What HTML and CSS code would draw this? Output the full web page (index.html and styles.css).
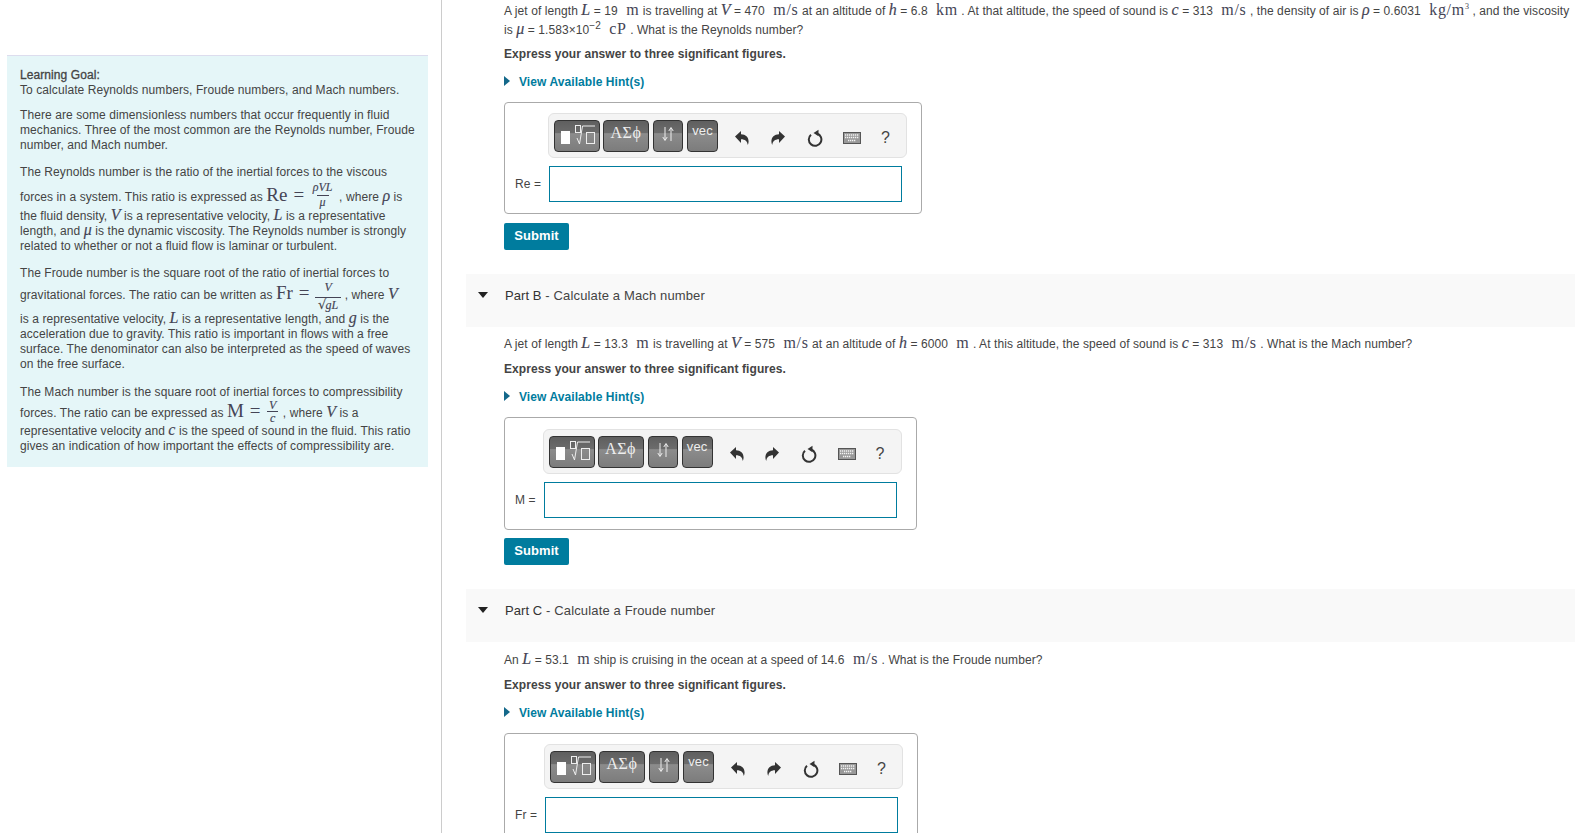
FILE: index.html
```html
<html>

<head>
	<title>Fluid numbers</title>
	<meta charset="UTF-8">
	<link rel="stylesheet" href="styles.css">
</head>

<body>
	<svg class="defs" width="0" height="0">
		<symbol id="undo" viewBox="0 0 16 16">
			<path d="M1 6.500 7 1v3.200c4.600 0 7.600 3 7.600 7.300 0 1.300-.3 2.500-.8 3.500-.5-3.600-2.600-5.700-6.800-5.700V13z" />
		</symbol>
		<symbol id="redo" viewBox="0 0 16 16">
			<path d="M15 6.500 9 1v3.200c-4.600 0-7.600 3-7.600 7.300 0 1.300.3 2.500.8 3.500.5-3.600 2.600-5.700 6.800-5.700V13z" />
		</symbol>
		<symbol id="reset" viewBox="0 0 18 18">
			<path d="M5 5.700A6.300 6.300 0 1 0 11 4.500" fill="none" stroke="#333" stroke-width="2" />
			<path d="M12.500 0.800v6.500L7.500 4z" />
		</symbol>
		<symbol id="keys" viewBox="0 0 18 12">
			<rect x="0.500" y="0.500" width="17" height="11" fill="#999" stroke="#555" />
			<path d="M2 3h14M2 5.500h14M5 8.500h8" stroke="#f4f4f4" stroke-width="1.300" stroke-dasharray="1.300 .7" />
		</symbol>
		<symbol id="templ" viewBox="0 0 44 30">
			<rect x="6" y="10" width="9" height="13" fill="#fff" />
			<rect x="20.500" y="4.500" width="5" height="7" fill="none" stroke="#eee" />
			<path d="M22 17l2.500 6 3-18H40" fill="none" stroke="#eee" />
			<rect x="31.500" y="11.500" width="8" height="11" fill="none" stroke="#eee" />
		</symbol>
		<symbol id="arrows" viewBox="0 0 12 16">
			<path d="M3 1v13M.8 11 3 14.500 5.200 11M9 15V2M6.800 5 9 1.500 11.200 5" fill="none" stroke="#eee" />
		</symbol>
	</svg>

	<div class="layout">
		<div class="left">
			<div class="goal">
				<p class="goal-first"><b class="goal-head">Learning Goal:</b><br>To calculate Reynolds numbers, Froude numbers, and Mach numbers.</p>
				<p>There are some dimensionless numbers that occur frequently in fluid mechanics. Three of the most common are
					the Reynolds number, Froude number, and Mach number.</p>
				<p>The Reynolds number is the ratio of the inertial forces to the viscous<br>
					forces in a system. This ratio is expressed as <span class="big">Re =</span>
					<span class="frac frac-re"><span class="num mi">ρVL</span><span class="den mi">μ</span></span> , where <span class="mi">ρ</span> is<br>
					the fluid density, <span class="mi">V</span> is a representative velocity, <span class="mi">L</span> is a representative<br>
					length, and <span class="mi">μ</span> is the dynamic viscosity. The Reynolds number is strongly<br>
					related to whether or not a fluid flow is laminar or turbulent.</p>
				<p class="froude">The Froude number is the square root of the ratio of inertial forces to<br>
					gravitational forces. The ratio can be written as <span class="big">Fr =</span>
					<span class="frac frac-fr"><span class="num mi">V</span><span class="den mi"><span class="root">√</span><span class="radicand">gL</span></span></span> , where <span class="mi">V</span><br>
					is a representative velocity, <span class="mi">L</span> is a representative length, and <span class="mi">g</span> is the<br>
					acceleration due to gravity. This ratio is important in flows with a free<br>
					surface. The denominator can also be interpreted as the speed of waves<br>
					on the free surface.</p>
				<p>The Mach number is the square root of inertial forces to compressibility<br>
					forces. The ratio can be expressed as <span class="big">M =</span>
					<span class="frac frac-m"><span class="num mi">V</span><span class="den mi">c</span></span> , where <span class="mi">V</span> is a<br>
					representative velocity and <span class="mi">c</span> is the speed of sound in the fluid. This ratio<br>
					gives an indication of how important the effects of compressibility are.</p>
			</div>
		</div>

		<div class="right">
			<div class="part part-a">
				<p class="question">A jet of length <span class="mi">L</span> = 19 <span class="unit">m</span> is travelling at <span class="mi">V</span> = 470 <span class="unit">m/s</span> at an altitude of <span class="mi">h</span> = 6.8 <span class="unit">km</span> . At that altitude, the speed of sound is <span class="mi">c</span> = 313 <span class="unit">m/s</span> , the density of air is <span class="mi">ρ</span> = 0.6031 <span class="unit">kg/m<sup>3</sup></span> , and the viscosity<br>
					is <span class="mi">μ</span> = 1.583×10<sup class="exp">−2</sup> <span class="unit">cP</span> . What is the Reynolds number?</p>
				<p class="express">Express your answer to three significant figures.</p>
				<p class="hint"><span class="tri"></span>View Available Hint(s)</p>
				<div class="answer">
					<div></div>
					<div class="toolbar">
						<span class="btn btn-templ"><svg width="44" height="30"><use href="#templ" /></svg></span>
						<span class="btn btn-greek">ΑΣϕ</span>
						<span class="btn btn-arrows"><svg width="12" height="16"><use href="#arrows" /></svg></span>
						<span class="btn btn-vec">vec</span>
						<span class="tools">
							<svg width="16" height="16"><use href="#undo" /></svg>
							<svg width="16" height="16"><use href="#redo" /></svg>
							<svg width="18" height="18"><use href="#reset" /></svg>
							<svg width="18" height="12"><use href="#keys" /></svg>
							<span class="help">?</span>
						</span>
					</div>
					<label>Re =</label>
					<div class="field"></div>
				</div>
				<span class="submit">Submit</span>
			</div>

			<div class="part-head"><span class="down"></span><span><b class="part-name">Part B</b> - Calculate a Mach number</span></div>
			<div class="part part-b">
				<p class="question">A jet of length <span class="mi">L</span> = 13.3 <span class="unit">m</span> is travelling at <span class="mi">V</span> = 575 <span class="unit">m/s</span> at an altitude of <span class="mi">h</span> = 6000 <span class="unit">m</span> . At this altitude, the speed of sound is <span class="mi">c</span> = 313 <span class="unit">m/s</span> . What is the Mach number?</p>
				<p class="express">Express your answer to three significant figures.</p>
				<p class="hint"><span class="tri"></span>View Available Hint(s)</p>
				<div class="answer">
					<div></div>
					<div class="toolbar">
						<span class="btn btn-templ"><svg width="44" height="30"><use href="#templ" /></svg></span>
						<span class="btn btn-greek">ΑΣϕ</span>
						<span class="btn btn-arrows"><svg width="12" height="16"><use href="#arrows" /></svg></span>
						<span class="btn btn-vec">vec</span>
						<span class="tools">
							<svg width="16" height="16"><use href="#undo" /></svg>
							<svg width="16" height="16"><use href="#redo" /></svg>
							<svg width="18" height="18"><use href="#reset" /></svg>
							<svg width="18" height="12"><use href="#keys" /></svg>
							<span class="help">?</span>
						</span>
					</div>
					<label>M =</label>
					<div class="field"></div>
				</div>
				<span class="submit">Submit</span>
			</div>

			<div class="part-head"><span class="down"></span><span><b class="part-name">Part C</b> - Calculate a Froude number</span></div>
			<div class="part">
				<p class="question">An <span class="mi">L</span> = 53.1 <span class="unit">m</span> ship is cruising in the ocean at a speed of 14.6 <span class="unit">m/s</span> . What is the Froude number?</p>
				<p class="express">Express your answer to three significant figures.</p>
				<p class="hint"><span class="tri"></span>View Available Hint(s)</p>
				<div class="answer">
					<div></div>
					<div class="toolbar">
						<span class="btn btn-templ"><svg width="44" height="30"><use href="#templ" /></svg></span>
						<span class="btn btn-greek">ΑΣϕ</span>
						<span class="btn btn-arrows"><svg width="12" height="16"><use href="#arrows" /></svg></span>
						<span class="btn btn-vec">vec</span>
						<span class="tools">
							<svg width="16" height="16"><use href="#undo" /></svg>
							<svg width="16" height="16"><use href="#redo" /></svg>
							<svg width="18" height="18"><use href="#reset" /></svg>
							<svg width="18" height="12"><use href="#keys" /></svg>
							<span class="help">?</span>
						</span>
					</div>
					<label>Fr =</label>
					<div class="field"></div>
				</div>
			</div>
		</div>
	</div>
</body>

</html>
```

FILE: styles.css
```css
html,
body {
	margin: 0;
	height: 833px;
	overflow: hidden;
	background: #fff;
}

body,
* {
	font-family: "Liberation Sans", Arial, sans-serif;
	font-size: 12px;
	letter-spacing: 0.08px;
	color: #444;
}

.defs {
	display: block;
	height: 0;
}

.layout {
	display: flex;
	height: 833px;
	overflow: hidden;
}

.left {
	width: 442px;
	flex: none;
	padding: 55px 0 0 7px;
	box-sizing: border-box;
	border-right: 1px solid #ccc;
}

.goal {
	width: 421px;
	box-sizing: border-box;
	padding: 12px 8px 13px 13px;
	background: #e5f6f8;
	border-top: 1px solid #dde;
	line-height: 15px;
}

.goal p {
	margin: 0 0 12px 0;
}

.goal .goal-first {
	margin-bottom: 10px;
}

.goal .froude {
	margin-bottom: 13px;
}

.goal p:last-child {
	margin: 0;
}

.goal-head {
	font-weight: normal;
	-webkit-text-stroke: 0.3px #444;
}

.mi {
	font-family: "Liberation Serif", serif;
	font-style: italic;
	font-size: 16px;
	line-height: 0;
	-webkit-text-stroke: 0.15px #445;
	color: #445;
}

.unit,
.unit sup {
	font-family: "Liberation Serif", serif;
	color: #445;
}

.unit {
	font-size: 16px;
	letter-spacing: 0.7px;
	line-height: 0;
	margin: 0 0 0 5px;
}

.unit sup {
	font-size: 8px;
	line-height: 0;
}

.exp {
	font-size: 10px;
	line-height: 0;
}

.big {
	font-family: "Liberation Serif", serif;
	font-size: 19px;
	word-spacing: 1px;
	line-height: 0;
	color: #445;
}

.frac {
	display: inline-flex;
	flex-direction: column;
	align-items: center;
	margin: 0 0 0 2px;
}

.frac .mi {
	display: block;
	font-size: 12px;
	text-align: center;
	padding: 0 3px;
}

.frac .den {
	border-top: 1px solid #445;
}

.frac-re {
	vertical-align: 10px;
}

.frac-re .num {
	line-height: 14px;
	padding-bottom: 1px;
}

.frac-re .den {
	line-height: 13px;
}

.frac-fr {
	vertical-align: 8px;
}

.frac-fr .num {
	line-height: 12px;
	padding-bottom: 4px;
}

.frac-fr .den {
	line-height: 14px;
}

.frac-m {
	vertical-align: 8px;
}

.frac-m .num {
	line-height: 11px;
}

.frac-m .den {
	line-height: 12px;
}

.root {
	font-size: 13px;
	font-style: normal;
	line-height: 0;
	font-family: "DejaVu Sans", sans-serif;
}

.radicand {
	font-family: "Liberation Serif", serif;
	font-size: 12px;
	color: #445;
	border-top: 1px solid #445;
	margin-left: -1px;
}

.right {
	flex: 1;
	min-width: 0;
	padding: 0 0 0 23px;
}

.question {
	margin: 0 0 0 39px;
	line-height: 19px;
	white-space: nowrap;
}

.part {
	margin: 0;
}

.part-a {
	height: 274px;
	padding-top: 2px;
	box-sizing: border-box;
}

.part:not(.part-a) {
	padding-top: 8px;
	height: 262px;
	box-sizing: border-box;
}

.part:last-child {
	padding-top: 9px;
}

.express {
	margin: 6px 0 0 39px;
	line-height: 17px;
	font-weight: bold;
}

.part:not(.part-a) .express {
	margin-top: 7px;
}

.hint {
	margin: 11px 0 0 39px;
	line-height: 17px;
	font-weight: bold;
	color: #007c9e;
	display: flex;
	align-items: center;
}

.tri {
	width: 0;
	height: 0;
	border-left: 6px solid #14688a;
	border-top: 5px solid transparent;
	border-bottom: 5px solid transparent;
	margin: -3px 9px 0 0;
}

.answer {
	display: grid;
	grid-template-columns: auto 358px;
	column-gap: 8px;
	row-gap: 8px;
	align-items: center;
	width: fit-content;
	margin: 11px 0 0 39px;
	padding: 10px 14px 11px 10px;
	border: 1px solid #aaa;
	border-radius: 4px;
}

.part-b .answer {
	padding-top: 11px;
}

.toolbar {
	display: flex;
	align-items: center;
	gap: 3px;
	height: 45px;
	margin-left: -1px;
	box-sizing: border-box;
	padding: 0 5px;
	background: #f4f4f4;
	border: 1px solid #e2e2e2;
	border-radius: 6px;
}

.btn {
	display: flex;
	align-items: flex-start;
	justify-content: center;
	height: 32px;
	box-sizing: border-box;
	border: 1px solid #333;
	border-radius: 4px;
	background: linear-gradient(#5f5f5f, #6c6c6c 40%, #8c8c8c 42%, #7c7c7c);
	color: #f2f2f2;
}

.btn-templ {
	width: 46px;
}

.btn-greek {
	width: 46px;
	margin-right: 1px;
	font-family: "Liberation Serif", serif;
	font-size: 16px;
	letter-spacing: 0.6px;
	line-height: 24px;
	color: #eee;
}

.btn-arrows {
	width: 30px;
	margin-right: 1px;
	padding-top: 5px;
}

.btn-vec {
	width: 31px;
	font-size: 13px;
	line-height: 20px;
	color: #eee;
}

.tools {
	display: flex;
	align-items: center;
	justify-content: space-between;
	flex: 1;
	padding: 4px 11px 0 13px;
}

.tools svg {
	fill: #333;
}

.help {
	font-size: 16px;
	color: #444;
}

.field {
	height: 36px;
	width: 353px;
	box-sizing: border-box;
	border: 1px solid #007c9e;
}

.submit {
	display: inline-block;
	margin: 9px 0 0 39px;
	width: 65px;
	height: 27px;
	line-height: 25px;
	text-align: center;
	font-weight: bold;
	font-size: 13px;
	color: #fff;
	background: #007c9e;
	border-radius: 2px;
}

.part-b .submit {
	margin-top: 8px;
}

.part-head {
	display: flex;
	align-items: flex-start;
	height: 53px;
	margin-left: 1px;
	padding: 12px 0 0 12px;
	box-sizing: border-box;
	background: #f9f9f9;
	line-height: 19px;
}

.part-head span {
	font-size: 13px;
	letter-spacing: 0.14px;
}

.part-name {
	font-size: 13px;
	font-weight: normal;
	color: #333;
}

.down {
	width: 0;
	height: 0;
	margin: 6px 17px 0 0;
	border-top: 6px solid #222;
	border-left: 5px solid transparent;
	border-right: 5px solid transparent;
}
```
